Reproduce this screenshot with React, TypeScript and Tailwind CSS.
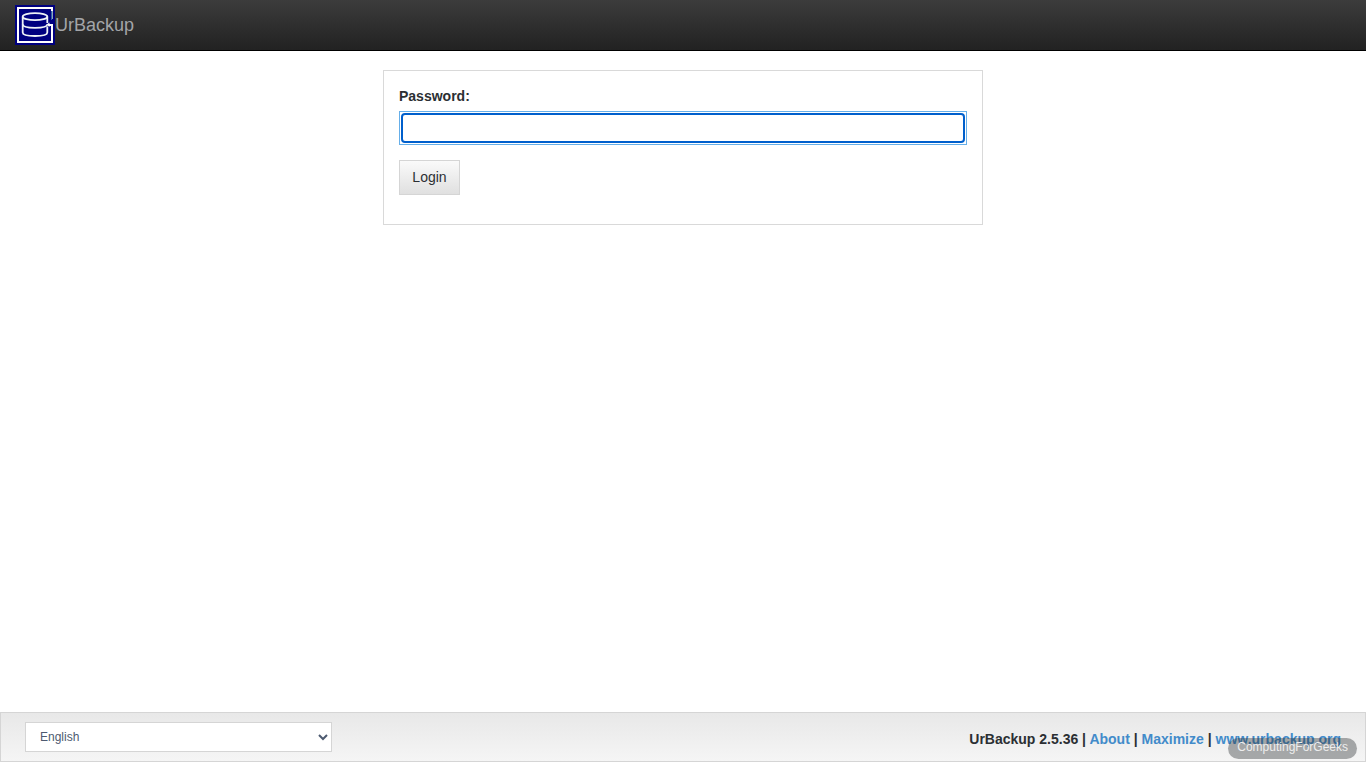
import React from "react";

const Logo = () => (
  <svg width="40" height="40" viewBox="0 0 40 40" fill="none" aria-hidden="true">
    <rect width="40" height="40" fill="#000080" />
    <path d="M37 19V37H3V3H38" stroke="#fff" strokeWidth="2" />
    <path d="M37 2V6" stroke="#fff" strokeWidth="2" />
    <path d="M36.500 6V15" stroke="#2f5fa8" strokeWidth="1" />
    <path d="M37.500 6V14" stroke="#8fa6b8" strokeWidth="1" />
    <path d="M38 20H34" stroke="#fff" strokeWidth="2" />
    <path d="M31.500 19.500L34.500 17.500V22Z" fill="#fff" />
    <g stroke="#eef2f6" strokeWidth="1.8">
      <ellipse cx="20" cy="11.700" rx="12.300" ry="3.500" />
      <path d="M7.700 11.700V27.500C7.700 29.700 13 31 20 31S32.300 29.700 32.300 27.500V21.500" />
      <path d="M32.300 11.700V18" />
      <path d="M7.700 19.300C7.700 21.500 13 22.800 20 22.800S32.300 21.500 32.300 19.300" />
    </g>
  </svg>
);

const Navbar = () => (
  <header className="flex h-[51px] items-center border-b border-black bg-gradient-to-b from-[#3c3c3c] to-[#222] px-[15px]">
    <a href="#" className="flex items-center text-lg leading-5 text-[#a3a5a8]">
      <Logo />
      <span>UrBackup</span>
    </a>
  </header>
);

const LoginForm = () => (
  <form
    className="mx-auto mt-[19px] w-full max-w-[600px] border border-[#d9d9d9] px-[15px] pt-[15px] pb-[29px]"
    onSubmit={(e) => e.preventDefault()}
  >
    <label htmlFor="password" className="mb-[5px] block font-bold">
      Password:
    </label>
    <div className="border border-[#66afe9] p-px">
      <input
        id="password"
        type="password"
        className="block h-[30px] w-full rounded-sm border-2 border-[#005fcc] bg-white px-2.5 outline-none"
      />
    </div>
    <button
      type="submit"
      className="mt-[15px] block h-[35px] w-[61px] border border-[#d5d5d5] bg-gradient-to-b from-[#fafafa] to-[#e0e0e0] pb-0.5"
    >
      Login
    </button>
  </form>
);

const Footer = () => (
  <footer className="relative mb-1.5 flex h-[50px] items-center justify-between border border-[#d5d5d5] bg-gradient-to-b from-[#e8e8e8] to-[#f5f5f5] px-6">
    <select
      aria-label="Language"
      className="h-[30px] w-[307px] border border-[#d5d5d5] bg-white pl-2.5 text-xs text-[#4d5a70]"
    >
      <option>English</option>
    </select>
    <div className="pt-1 font-bold">
      UrBackup 2.5.36 |{" "}
      <a href="#about" className="text-[#428bca]">
        About
      </a>{" "}
      |{" "}
      <a href="#maximize" className="text-[#428bca]">
        Maximize
      </a>{" "}
      |{" "}
      <a href="#website" className="text-[#428bca]">
        www.urbackup.org
      </a>
    </div>
    <span className="absolute right-2 bottom-[2px] flex h-[21px] items-center rounded-full bg-[#303438]/40 px-[9px] pb-[3px] text-xs text-[#eee]">
      ComputingForGeeks
    </span>
  </footer>
);

const App = () => {
  return (
    <div className="flex min-h-screen flex-col bg-white font-['Liberation_Sans',Arial,sans-serif] text-sm text-[#2b2f33]">
      <Navbar />
      <main className="grow">
        <LoginForm />
      </main>
      <Footer />
    </div>
  );
};

export default App;
